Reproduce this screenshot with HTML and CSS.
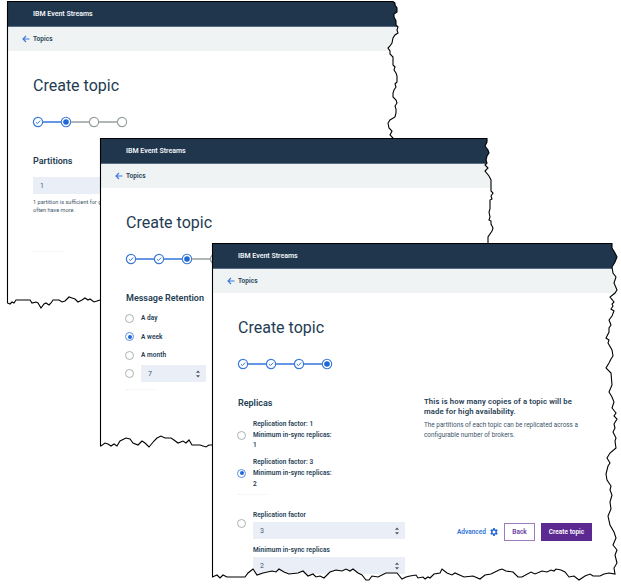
FILE: index.html
```html
<!DOCTYPE html>
<html lang="en">
<head>
<meta charset="utf-8">
<title>IBM Event Streams - Create topic</title>
<link rel="stylesheet" href="styles.css">
</head>
<body>
<svg class="defs" aria-hidden="true">
  <defs>
    <path id="edge-a" d="M7.5 1.5H393L395 3V5L397 8V12L394 14V17L396 21V25L398 27L397 30L398 33L395 35L393 38L392 43L390 46L388 48L390 51V54L393 57V65L395 67L394 70L396 73L397 76V82L395 84L396 87L394 90L393 93V97L396 100L397 103L395 106L396 109V113L395 117L390 120L388 123L389 128L392 131L390 135L393 138V300H100L97 301L94 302L90 299L88 300L85 298L82 300L78 302L75 299L72 298L69 297L65 301L62 302L59 300H53L51 303L49 305L46 303L44 304L41 308L38 303L36 302L32 303L30 300H16L14 303L12 302L10 304L7.5 303Z"/>
    <path id="edge-b" d="M100.500 138.500H487V142L485 146L488 150L489 153L487 156L486 160L487 163L485 165L488 168L485 171L489 176L491 180V191L493 193L491 196L492 199L490 200V209L489 212L490 217L489 220L491 221V224L493 228L492 231L488 237V445H212L209 445L206 447L200 445H192L189 440L186 443L183 441L178 443L174 440L171 438H165L161 436L157 438L154 441L149 447L145 443L142 441L138 445L133 443L130 439L126 438L120 441L117 446L114 444L111 446L108 444L105 443L101 446H100.500Z"/>
    <path id="edge-c" d="M212.500 243.500H612V248L615 253L617 257L615 262L612 267L613 273L616 277L614 283L617 290L615 293L610 297L614 302L612 304L613 306L611 309L614 311L612 316L609 320L611 325L609 328V332L606 338L609 340L608 343L612 350L613 356L611 359L609 363L606 368L611 373L612 385L609 392L612 397L614 402L612 408L616 413L614 416L617 419L614 424L615 428L613 432L616 438L615 441L616 448L610 453L607 458L610 463L608 466L606 474L607 480L611 486L610 490L612 495L610 502L611 509L608 516L610 525L614 532L616 538L613 545L617 550L615 555L617 563L614 568L615 574L609 573L604 574L600 576H593L590 574L585 576L579 580L574 576L569 577L565 572L561 570L556 569L554 571L551 570L547 572L542 571L535 574L531 572L522 577H518L513 572L506 571L502 569L499 570L495 572L491 574L485 575L480 579L473 576L464 577L455 573L452 575L447 573L442 569L440 573L434 574L430 578L428 577L425 579L423 577L418 578L416 575L410 576L406 577L402 579L397 573H386L378 577L372 576L369 580H366L362 575L358 573L353 569L350 571L346 569L342 571L336 570L330 572L324 578L320 576L316 577L313 574L308 576L303 571L298 573L289 574L284 572L279 569L276 572L272 571L263 573L257 575L253 569L248 573L245 577H227L223 575L220 578L217 575L212.500 577Z"/>
    <clipPath id="clip-a"><use href="#edge-a" transform="translate(-7 -1)"/></clipPath>
    <clipPath id="clip-b"><use href="#edge-b" transform="translate(-100 -138)"/></clipPath>
    <clipPath id="clip-c"><use href="#edge-c" transform="translate(-212 -243)"/></clipPath>
    <symbol id="back" viewBox="0 0 8 8"><path d="M7.500 4H1M4 1L1 4L4 7" fill="none" stroke="#3b79d9" stroke-width="1.100"/></symbol>
    <symbol id="done" viewBox="0 0 12 12"><circle cx="6" cy="6" r="4.600" fill="#fff" stroke="#3b79d9" stroke-width="1.200"/><path d="M3.900 6.200L5.400 7.600L8.200 4.600" fill="none" stroke="#3b79d9" stroke-width="1"/></symbol>
    <symbol id="now" viewBox="0 0 12 12"><circle cx="6" cy="6" r="4.700" fill="#fff" stroke="#3b79d9" stroke-width="1.100"/><circle cx="6" cy="6" r="2.800" fill="#1f66d6"/></symbol>
    <symbol id="todo" viewBox="0 0 12 12"><circle cx="6" cy="6" r="4.600" fill="#fff" stroke="#959f9f" stroke-width="1.200"/></symbol>
    <symbol id="spin" viewBox="0 0 4 8"><path d="M0 2.800L2 .5L4 2.800ZM0 5.200L2 7.500L4 5.200Z" fill="#4a5560"/></symbol>
    <symbol id="gear" viewBox="0 0 16 16"><path fill="#1f66d6" fill-rule="evenodd" d="M6.500 0H9.500L10 2.400L11.500 3.300L13.900 2.500L15.400 5.100L13.600 6.800V9.200L15.400 10.900L13.900 13.500L11.500 12.700L10 13.600L9.500 16H6.500L6 13.600L4.500 12.700L2.100 13.500L.6 10.900L2.400 9.200V6.800L.6 5.100L2.100 2.500L4.500 3.300L6 2.400ZM8 5A3 3 0 1 0 8 11A3 3 0 1 0 8 5Z"/></symbol>
  </defs>
</svg>

<main class="desktop">
  <section class="window window-a">
    <div class="sheet">
      <header class="brand">IBM Event Streams</header>
      <nav class="crumb"><svg class="back"><use href="#back"/></svg>Topics</nav>
      <h1>Create topic</h1>
      <div class="steps">
        <svg><use href="#done"/></svg><i class="on"></i><svg><use href="#now"/></svg><i></i><svg><use href="#todo"/></svg><i></i><svg><use href="#todo"/></svg>
      </div>
      <h2>Partitions</h2>
      <div class="field partitions">1</div>
      <p class="help">1 partition is sufficient for getting started but, production systems<br>often have more.</p>
      <div class="ghost"></div>
    </div>
    <svg class="outline" viewBox="7 1 391 307"><use href="#edge-a"/></svg>
  </section>

  <section class="window window-b">
    <div class="sheet">
      <header class="brand">IBM Event Streams</header>
      <nav class="crumb"><svg class="back"><use href="#back"/></svg>Topics</nav>
      <h1>Create topic</h1>
      <div class="steps">
        <svg><use href="#done"/></svg><i class="on"></i><svg><use href="#done"/></svg><i class="on"></i><svg><use href="#now"/></svg><i></i><svg><use href="#todo"/></svg>
      </div>
      <h2>Message Retention</h2>
      <div class="retention">
        <label class="option"><span class="radio"></span>A day</label>
        <label class="option"><span class="radio checked"></span>A week</label>
        <label class="option"><span class="radio"></span>A month</label>
        <div class="option"><span class="radio"></span><div class="field days">7<svg class="spin"><use href="#spin"/></svg></div></div>
      </div>
      <div class="ghost"></div>
    </div>
    <svg class="outline" viewBox="100 138 393 309"><use href="#edge-b"/></svg>
  </section>

  <section class="window window-c">
    <div class="sheet">
      <header class="brand">IBM Event Streams</header>
      <nav class="crumb"><svg class="back"><use href="#back"/></svg>Topics</nav>
      <h1>Create topic</h1>
      <div class="steps">
        <svg><use href="#done"/></svg><i class="on"></i><svg><use href="#done"/></svg><i class="on"></i><svg><use href="#done"/></svg><i class="on"></i><svg><use href="#now"/></svg>
      </div>
      <div class="columns">
        <div class="left">
          <h2>Replicas</h2>
          <label class="option preset"><span class="radio"></span><span>Replication factor: 1<br>Minimum in-sync replicas:<br>1</span></label>
          <label class="option preset"><span class="radio checked"></span><span>Replication factor: 3<br>Minimum in-sync replicas:<br>2</span></label>
          <div class="ghost"></div>
          <div class="option custom">
            <span class="radio"></span>
            <div class="fields">
              <div class="label">Replication factor</div>
              <div class="field">3<svg class="spin"><use href="#spin"/></svg></div>
              <div class="label">Minimum in-sync replicas</div>
              <div class="field">2<svg class="spin"><use href="#spin"/></svg></div>
            </div>
          </div>
        </div>
        <aside class="right">
          <h3>This is how many copies of a topic will be<br>made for high availability.</h3>
          <p>The partitions of each topic can be replicated across a<br>configurable number of brokers.</p>
          <div class="actions">
            <span class="advanced">Advanced</span><svg class="gear"><use href="#gear"/></svg>
            <span class="button">Back</span><span class="button primary">Create topic</span>
          </div>
        </aside>
      </div>
    </div>
    <svg class="outline" viewBox="212 243 405 337"><use href="#edge-c"/></svg>
  </section>
</main>
</body>
</html>
```

FILE: styles.css
```css
* { box-sizing: border-box; }
body {
  margin: 0;
  background: #fff;
  color: #243c52;
  font: 6.500px/10px Roboto, "Liberation Sans", sans-serif;
  white-space: nowrap;
}
svg { display: block; flex: none; }
.defs { position: absolute; width: 0; height: 0; }
.desktop { position: relative; width: 621px; height: 584px; overflow: hidden; }

.window { position: absolute; }
.window-a { left: 7px; top: 1px; width: 391px; height: 307px; }
.window-b { left: 100px; top: 138px; width: 393px; height: 309px; }
.window-c { left: 212px; top: 243px; width: 405px; height: 337px; }
.sheet { height: 100%; background: #fff; overflow: hidden; }
.window-a .sheet { clip-path: url(#clip-a); }
.window-b .sheet { clip-path: url(#clip-b); }
.window-c .sheet { clip-path: url(#clip-c); }
.outline {
  position: absolute;
  inset: 0;
  width: 100%;
  height: 100%;
  overflow: visible;
  fill: none;
  stroke: #000;
  stroke-width: 1.100;
}

.brand {
  height: 26px;
  padding-left: 26px;
  background: #20364c;
  border-bottom: 1px solid #566b86;
  color: #f2f5f8;
  font-weight: 600;
  font-size: 7px;
  line-height: 27px;
}
.crumb {
  display: flex;
  align-items: center;
  gap: 3px;
  height: 24px;
  padding-left: 15px;
  background: #eff3f4;
  font-weight: 600;
  font-size: 6.500px;
  letter-spacing: .08px;
}
.back { width: 8px; height: 8px; }
h1 {
  margin: 23px 0 0 26px;
  font-size: 16px;
  font-weight: 400;
  line-height: 24px;
}
.steps { display: flex; align-items: center; height: 12px; margin: 18px 0 0 25px; }
.steps svg { width: 12px; height: 12px; }
.steps i { width: 18px; height: 2px; margin: 0 -1px; background: #b0b7b7; }
.steps i.on { background: #6597e5; }
h2 { margin: 26px 0 0 26px; font-size: 9px; line-height: 15px; font-weight: 600; }

.field {
  display: flex;
  align-items: center;
  justify-content: space-between;
  height: 17px;
  padding: 0 6px 0 7px;
  background: #eaeff7;
  color: #40566a;
  font-weight: 400;
  font-size: 7px;
}
.spin { width: 4px; height: 8px; }
.partitions { width: 151px; margin: 8px 0 0 26px; }
.help { margin: 4px 0 0 26px; font-size: 5.600px; line-height: 8px; color: #40566a; }
.ghost { width: 30px; margin-left: 26px; border-top: 1px dotted #edf0f1; }
.window-a .ghost { margin-top: 37px; }

.option { display: flex; align-items: center; font-weight: 600; letter-spacing: .07px; }
.radio {
  display: grid;
  place-items: center;
  flex: none;
  width: 9px;
  height: 9px;
  border: 1px solid #a9b2b2;
  border-radius: 50%;
}
.radio.checked { border-color: #5a8fe4; }
.radio.checked::after { content: ""; width: 4px; height: 4px; border-radius: 50%; background: #1f66d6; }
.retention { display: grid; grid-auto-rows: 18.500px; margin: 3px 0 0 25px; }
.retention .option { gap: 7px; }
.days { width: 65px; }
.window-b .ghost { margin-top: 6px; }

.columns { display: grid; grid-template-columns: 212px 1fr; }
.columns .option { gap: 7px; margin-left: 25px; }
.preset { line-height: 10.700px; margin-top: 8px; }
.preset + .preset { margin-top: 6px; }
.window-c .ghost { margin-top: 5px; }
.custom { margin-top: 15px; }
.columns .custom { align-items: flex-start; }
.custom .radio { margin-top: 9px; }
.fields { width: 152px; }
.fields .label { height: 12px; }
.fields .field + .label { margin: 6px 0 0; }
h3 { margin: 27px 0 0; font-size: 7.700px; line-height: 10px; font-weight: 600; letter-spacing: .13px; }
.right p { margin: 4px 0 0; font-size: 6.400px; line-height: 9.500px; color: #40566a; }
.actions { display: flex; align-items: center; height: 18px; margin: 83px 0 0 33px; font-weight: 600; }
.advanced { width: 33px; color: #2f72da; }
.gear { width: 8px; height: 8px; margin-right: 6px; }
.button {
  width: 31px;
  margin-right: 6px;
  border: 1px solid #9d7cc0;
  color: #6a3aa0;
  line-height: 16px;
  text-align: center;
}
.button.primary { width: 51px; background: #5b2991; border-color: #5b2991; color: #fff; }
```
